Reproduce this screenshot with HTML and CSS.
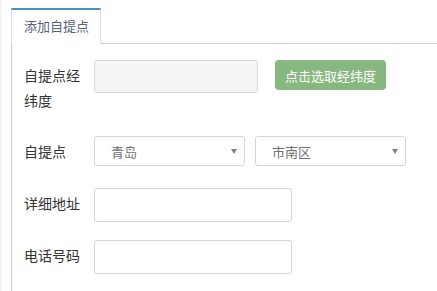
FILE: index.html
```html
<!DOCTYPE html>
<html lang="zh">
<head>
<meta charset="utf-8">
<title>添加自提点</title>
<link rel="stylesheet" href="styles.css">
</head>
<body>
<div class="page">
  <div class="tabs">
    <div class="tab active">添加自提点</div>
  </div>
  <div class="tab-content">
    <div class="form">
      <div class="row row-tall">
        <label class="label">自提点经纬度</label>
        <input class="input input-readonly" type="text" readonly>
        <button class="btn-success" type="button">点击选取经纬度</button>
      </div>
      <div class="row">
        <label class="label">自提点</label>
        <div class="select"><span class="select-text">青岛</span><span class="caret"></span></div>
        <div class="select"><span class="select-text">市南区</span><span class="caret"></span></div>
      </div>
      <div class="row">
        <label class="label">详细地址</label>
        <input class="input input-wide" type="text">
      </div>
      <div class="row">
        <label class="label">电话号码</label>
        <input class="input input-wide" type="text">
      </div>
    </div>
  </div>
</div>
</body>
</html>
```
FILE: styles.css
```css
html, body {
  margin: 0;
  padding: 0;
  background: #fff;
}
body {
  font-family: "Open Sans", "Noto Sans CJK SC", sans-serif;
  color: #393939;
  height: 291px;
  overflow: hidden;
}
.page {
  box-sizing: border-box;
  border-left: 2px solid #f3f3f3;
  padding: 8px 0 0 9px;
  height: 291px;
  display: flex;
  flex-direction: column;
}
.tabs {
  display: flex;
  border-bottom: 1px solid #c5d0dc;
  height: 35px;
  flex: none;
}
.tab {
  box-sizing: border-box;
  width: 90px;
  height: 36px;
  border: 1px solid #d9e0e8;
  border-top: 2px solid #4c8fbd;
  border-bottom: 0;
  background: #fff;
  color: #576373;
  font-size: 13px;
  line-height: 32px;
  padding-left: 12px;
}
.tab-content {
  flex: 1;
  min-height: 0;
  overflow: hidden;
  border-left: 1px solid #c5d0dc;
  padding: 16px 12px 0;
}
.form {
  display: grid;
  row-gap: 18px;
}
.row {
  display: flex;
  align-items: flex-start;
  min-height: 34px;
}
.row-tall {
  min-height: 58px;
}
.label {
  width: 60px;
  margin-right: 10px;
  padding-top: 3px;
  font-size: 14px;
  line-height: 25px;
  color: #333;
}
.input {
  box-sizing: border-box;
  height: 34px;
  border: 1px solid #d5d5d5;
  border-radius: 3px;
  background: #fff;
  padding: 0 8px;
  font: inherit;
  margin: 0;
}
.input-readonly {
  width: 164px;
  height: 33px;
  background: #f5f5f5;
}
.input-wide {
  width: 198px;
}
.btn-success {
  box-sizing: border-box;
  margin: 0 0 0 17px;
  width: 111px;
  height: 30px;
  border: 0;
  border-radius: 4px;
  background: #87b87f;
  color: #fff;
  font-family: "Open Sans", "Noto Sans CJK SC", sans-serif;
  font-size: 13px;
  padding: 0;
}
.select {
  box-sizing: border-box;
  width: 151px;
  height: 30px;
  border: 1px solid #d5d5d5;
  border-radius: 3px;
  display: flex;
  align-items: center;
  justify-content: space-between;
  padding: 0 7px 0 16px;
  font-size: 13px;
  color: #707070;
}
.select + .select {
  margin-left: 10px;
}
.caret {
  width: 0;
  height: 0;
  border-left: 3px solid transparent;
  border-right: 3px solid transparent;
  border-top: 5px solid #808080;
}
```
